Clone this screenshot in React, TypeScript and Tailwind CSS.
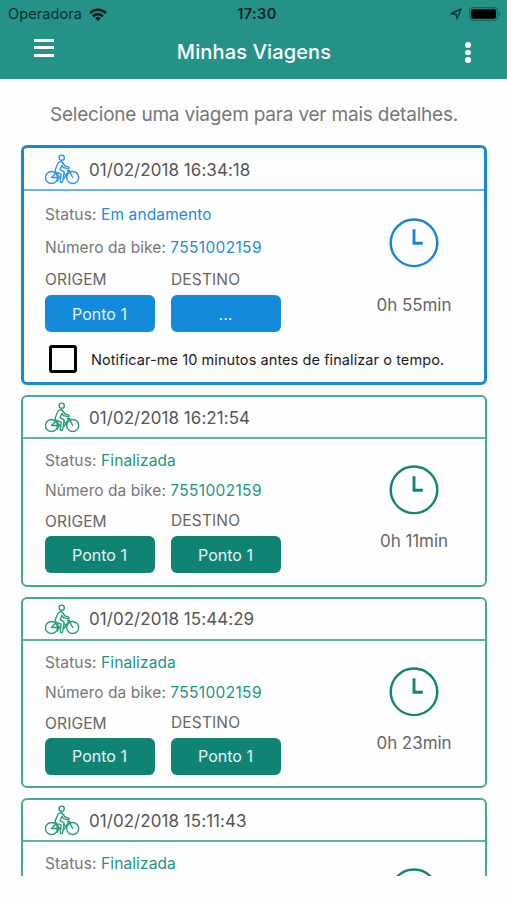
import React from "react";

type Trip = {
  date: string;
  status: string;
  bike?: string;
  from?: string;
  to?: string;
  duration?: string;
  active?: boolean;
};

const trips: Trip[] = [
  { date: "01/02/2018 16:34:18", status: "Em andamento", bike: "7551002159", from: "Ponto 1", to: "...", duration: "0h 55min", active: true },
  { date: "01/02/2018 16:21:54", status: "Finalizada", bike: "7551002159", from: "Ponto 1", to: "Ponto 1", duration: "0h 11min" },
  { date: "01/02/2018 15:44:29", status: "Finalizada", bike: "7551002159", from: "Ponto 1", to: "Ponto 1", duration: "0h 23min" },
  { date: "01/02/2018 15:11:43", status: "Finalizada" },
];

function Cyclist({ className }: { className: string }) {
  return (
    <svg viewBox="0 0 36 32" className={`h-8 w-9 shrink-0 ${className}`} fill="none" stroke="currentColor" strokeWidth="1.4" strokeLinecap="round" strokeLinejoin="round">
      <circle cx="6.5" cy="24.5" r="6" />
      <circle cx="27.7" cy="24.5" r="6" />
      <circle cx="16.7" cy="4.7" r="2.6" />
      <path d="M15.100 8.900c-1.500.3-2.300 1.300-2.800 2.800l-1.900 4.800c-.5 1.500 0 2.600 1.500 3.100l4.200 1.600-.8 7.200c0 1.400 2 1.600 2.300.2l1.500-8.600c.1-.8-.2-1.300-.9-1.700l-3-1.700 1.700-4.200 1.600 2.200 4.300 1c1.400.2 1.700-1.300.5-1.700l-3.200-.9-2.300-3c-.7-1-1.500-1.400-2.700-1.100Z" />
      <path d="M6.500 24.500l4.900-5M11.700 20.100l3.200 4.800M6.500 24.500h7.800M19.100 25.300l4.800-7.500M22.300 17.400h2.400M23.900 17.300l3.800 7.200M13.600 24.800l-1 3.300M19.100 20.800l2.400 2" />
    </svg>
  );
}

function Clock({ className }: { className: string }) {
  return (
    <svg viewBox="0 0 50 50" className={`size-[50px] shrink-0 ${className}`} fill="none" stroke="currentColor">
      <circle cx="25" cy="24.8" r="23.3" strokeWidth="2.4" />
      <path d="M25 11.200V25.200H33.800" strokeWidth="2.9" />
    </svg>
  );
}

function Stop({ label, value, fill, labelClass }: { label: string; value: string; fill: string; labelClass: string }) {
  return (
    <div className="flex w-[110px] flex-col text-[#666]">
      <span className={`h-[25px] leading-5 tracking-[0.15px] ${labelClass}`}>{label}</span>
      <span className={`flex h-[37px] items-center justify-center rounded-[6px] pr-px text-[16px] text-[#e3f6f7] ${fill}`}>{value}</span>
    </div>
  );
}

function TripCard({ trip }: { trip: Trip }) {
  const on = trip.active;
  const text = on ? "text-[#218cd8]" : "text-[#1c957f]";
  const stroke = on ? "text-[#1686d2]" : "text-[#128472]";
  const fill = on ? "bg-[#148adb]" : "bg-[#118373]";
  return (
    <article className={`flex shrink-0 flex-col rounded-[6px] ${on ? "h-[240px] border-[3px] border-[#1b88d6]" : "h-[191.5px] border-2 border-[#42ac98]"}`}>
      <header className={`flex shrink-0 items-center border-b-2 ${on ? "h-[43px] border-[#6ab5e8] pl-[21px]" : "h-[42px] border-[#5fb3a4] pl-[22px]"}`}>
        <Cyclist className={on ? "text-[#2f96e0]" : "text-[#27997f]"} />
        <time className={`pl-2 text-[17px] leading-6 tracking-[0.05px] text-[#555] ${on ? "pt-0.5" : "pt-px"}`}>{trip.date}</time>
      </header>
      <div className={`flex justify-between ${on ? "pr-[32px] pl-[21px]" : "pr-[33px] pl-[22px]"}`}>
        <div className="flex w-[237px] shrink-0 flex-col text-[15.5px] text-[#777]">
          <p className={`leading-5 tracking-[0.12px] whitespace-nowrap ${on ? "mt-[14px]" : "mt-[12px]"}`}>
            Status: <span className={text}>{trip.status}</span>
          </p>
          {trip.bike && (
            <p className={`leading-5 tracking-[0.05px] whitespace-nowrap ${on ? "mt-[13px]" : "mt-[10px]"}`}>
              Número da bike: <span className={`tracking-[0.34px] ${text}`}>{trip.bike}</span>
            </p>
          )}
          {trip.from && trip.to && (
            <div className={`flex gap-4 ${on ? "mt-3" : "mt-[10px]"}`}>
              <Stop label="ORIGEM" value={trip.from} fill={fill} labelClass={on ? "" : "pt-px"} />
              <Stop label="DESTINO" value={trip.to} fill={fill} labelClass="" />
            </div>
          )}
        </div>
        <div className="flex w-[76px] shrink-0 flex-col items-center">
          <Clock className={`${stroke} ${on ? "mt-[27px]" : "mt-[26px]"}`} />
          {trip.duration && (
            <span className={`text-[17px] leading-6 tracking-[-0.05px] whitespace-nowrap text-[#666] ${on ? "mt-[25px]" : "mt-[14px]"}`}>{trip.duration}</span>
          )}
        </div>
      </div>
      {on && (
        <label className="mt-[13px] flex items-center pl-[25px]">
          <span className="size-[28px] shrink-0 rounded-[3px] border-[3px] border-black" />
          <span className="pt-px pl-[14px] text-[14.5px] leading-5 tracking-[0.08px] whitespace-nowrap text-[#1b1b1b]">Notificar-me 10 minutos antes de finalizar o tempo.</span>
        </label>
      )}
    </article>
  );
}

export default function App() {
  return (
    <div className="flex h-[900px] w-[507px] flex-col overflow-hidden bg-[#fefefe] font-['Inter','Liberation_Sans',sans-serif]">
      <div className="flex h-[79px] shrink-0 flex-col bg-[#259288]">
        <div className="grid h-[28px] grid-cols-3 items-center pr-[6px] pl-2 text-[#082f2d]">
          <div className="flex items-center gap-[7px] text-[14.5px] leading-5 tracking-[0.1px]">
            <span>Operadora</span>
            <svg viewBox="0 0 18 13" className="h-[13px] w-[18px]" fill="none" stroke="#041d1b" strokeWidth="2.5">
              <path d="M1 5.100a11.300 11.300 0 0 1 16 0M4 8.400a7 7 0 0 1 10 0" />
              <path d="M6.200 10.200a4 4 0 0 1 5.600 0L9 13Z" fill="#041d1b" stroke="none" />
            </svg>
          </div>
          <span className="pl-[5px] text-center text-[14.5px] leading-5 font-semibold tracking-[0.4px] text-[#062322]">17:30</span>
          <div className="flex items-center justify-end gap-[7px]">
            <svg viewBox="0 0 12 12" className="size-3" fill="none" stroke="#073a36" strokeWidth="1.5" strokeLinejoin="round">
              <path d="M11 1L1 5.800L6 6.200L7 10.800Z" />
            </svg>
            <svg viewBox="0 0 32 14" className="h-[14px] w-8">
              <rect x=".7" y=".7" width="27.8" height="12.6" rx="3.5" fill="none" stroke="#14665f" strokeWidth="1.2" />
              <rect x="2.2" y="2.2" width="24.8" height="9.6" rx="2" fill="#000" />
              <path d="M29.800 4.800c2 .8 2 3.600 0 4.400Z" fill="#14665f" />
            </svg>
          </div>
        </div>
        <div className="grid h-[51px] grid-cols-[60px_1fr_60px] text-white">
          <div className="flex flex-col gap-[4.5px] pt-[10.5px] pl-[34px]">
            <span className="h-[3px] w-5 bg-white" />
            <span className="h-[3px] w-5 bg-white" />
            <span className="h-[3px] w-5 bg-white" />
          </div>
          <h1 className="pt-[11px] pl-px text-center text-[20px] leading-[26px] font-medium tracking-[0.15px] whitespace-nowrap">Minhas Viagens</h1>
          <div className="flex flex-col gap-[2px] pt-[14px] pl-[18px]">
            <span className="size-[5.5px] rounded-full bg-white" />
            <span className="size-[5.5px] rounded-full bg-white" />
            <span className="size-[5.5px] rounded-full bg-white" />
          </div>
        </div>
      </div>
      <main className="flex h-[797px] shrink-0 flex-col overflow-hidden pr-5 pl-[21px]">
        <p className="mt-[22px] mb-[16px] text-center text-[19px] leading-7 tracking-[-0.2px] whitespace-nowrap text-[#777]">Selecione uma viagem para ver mais detalhes.</p>
        <div className="flex flex-col gap-[10px]">
          {trips.map((trip) => (
            <TripCard key={trip.date} trip={trip} />
          ))}
        </div>
      </main>
    </div>
  );
}
